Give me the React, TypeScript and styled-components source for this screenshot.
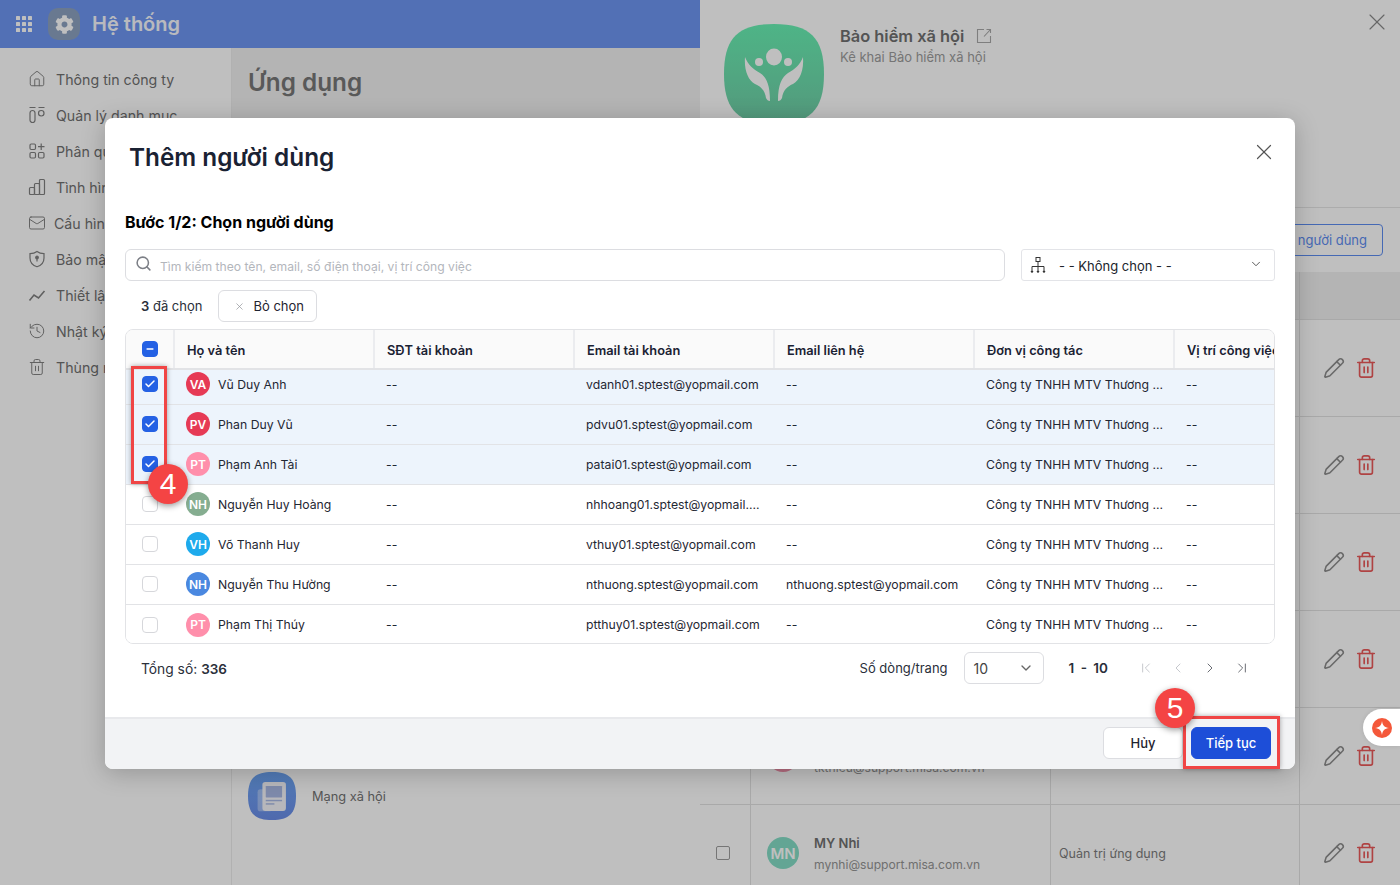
import React from "react";
import styled, { createGlobalStyle } from "styled-components";
import { FaCog } from "react-icons/fa";
import {
  Home,
  Mail,
  History,
  Trash2,
  Pencil,
  Search,
  X,
  ChevronDown,
  ChevronFirst,
  ChevronLast,
  ChevronLeft,
  ChevronRight,
  Check,
  Minus,
} from "lucide-react";

const GlobalStyle = createGlobalStyle`
  html, body {
    margin: 0;
    padding: 0;
    background: #fff;
    font-family: Inter, "Noto Sans", "Liberation Sans", sans-serif;
  }
  * { box-sizing: border-box; }
`;

const Screen = styled.div`
  position: relative;
  width: 1400px;
  height: 885px;
  display: flex;
  overflow: hidden;
`;

const Backdrop = styled.div`
  position: absolute;
  inset: 0;
  background: rgba(0, 0, 0, 0.25);
`;

/* ---------- left app ---------- */
const AppPane = styled.div`
  width: 700px;
  display: flex;
  flex-direction: column;
  background: #fff;
`;

const TopBar = styled.header`
  height: 48px;
  flex: none;
  background: #6e96f2;
  display: flex;
  align-items: center;
  padding-left: 16px;
  color: #fff;
`;

const GearTile = styled.div`
  width: 32px;
  height: 32px;
  margin-left: 16px;
  border-radius: 10px;
  background: #8da2c0;
  display: flex;
  align-items: center;
  justify-content: center;
`;

const AppName = styled.span`
  margin-left: 12px;
  font-size: 20px;
  font-weight: 600;
  color: #fff;
  opacity: 0.95;
`;

const AppBody = styled.div`
  flex: 1;
  display: flex;
  min-height: 0;
`;

const Sidebar = styled.nav`
  width: 232px;
  padding-top: 13.4px;
  border-right: 1px solid #ececec;
  display: flex;
  flex-direction: column;
`;

const NavItem = styled.div<{ $tight?: boolean }>`
  height: 36px;
  padding-left: 28px;
  display: flex;
  align-items: center;
  gap: ${(p) => (p.$tight ? "8px" : "10px")};
  font-size: 14.2px;
  color: #707070;
  svg { flex: none; color: #808080; }
`;

const Main = styled.main`
  flex: 1;
  display: flex;
  flex-direction: column;
`;

const PageHead = styled.div`
  height: 70px;
  padding-left: 16px;
  background: #f1f1f1;
  display: flex;
  align-items: center;
  font-size: 24.3px;
  font-weight: 600;
  color: #777;
  padding-bottom: 3px;
`;

const AppRow = styled.div`
  margin-top: 654px;
  padding-left: 16px;
  display: flex;
  align-items: center;
  gap: 16px;
  font-size: 12.8px;
  color: #727272;
`;

/* ---------- right drawer ---------- */
const Drawer = styled.aside`
  width: 700px;
  display: flex;
  flex-direction: column;
  background: #fff;
`;

const DrawerHead = styled.div`
  position: relative;
  height: 208px;
  flex: none;
  padding: 24px 0 0 24px;
  display: flex;
  gap: 16px;
  border-bottom: 1px solid #e6e6e6;
`;

const DrawerTitle = styled.div`
  padding-top: 2px;
  font-size: 16.4px;
  font-weight: 600;
  color: #707070;
  display: flex;
  align-items: center;
  gap: 12px;
  height: 22px;
  svg { color: #a8a8a8; }
`;

const DrawerSub = styled.div`
  margin-top: 3px;
  font-size: 13px;
  color: #9c9c9c;
`;

const DrawerClose = styled.div`
  position: absolute;
  top: 8px;
  right: 9px;
  color: #8a8a8a;
  display: flex;
`;

const DrawerTools = styled.div`
  height: 64px;
  flex: none;
  padding: 16px 17px 0 0;
  display: flex;
  justify-content: flex-end;
`;

const OutlineButton = styled.div`
  height: 32px;
  padding: 0 15px;
  border: 1px solid #5d8cf0;
  border-radius: 4px;
  display: flex;
  align-items: center;
  font-size: 13px;
  color: #5d8cf0;
`;

const MemberHead = styled.div`
  height: 48px;
  flex: none;
  background: #f1f1f1;
  border-bottom: 1px solid #e2e2e2;
  display: grid;
  grid-template-columns: 51px 300px 249px 1fr;
`;

const MemberRow = styled.div`
  height: 97px;
  flex: none;
  border-bottom: 1px solid #e2e2e2;
  display: grid;
  grid-template-columns: 51px 300px 249px 1fr;
`;

const MemberCell = styled.div`
  border-right: 1px solid #e2e2e2;
  display: flex;
  align-items: center;
  font-size: 12.5px;
  color: #7c7c7c;
  padding-left: 8px;
  &:last-child { border-right: 0; }
`;

const MemberCheckCell = styled(MemberCell)`
  padding-left: 16px;
`;

const MemberBox = styled.span`
  width: 14px;
  height: 14px;
  border: 1px solid #9c9c9c;
  border-radius: 2px;
`;

const NameCell = styled(MemberCell)`
  padding-left: 16px;
  gap: 15px;
`;

const MemberAvatar = styled.span<{ $bg: string }>`
  width: 32px;
  height: 32px;
  border-radius: 50%;
  background: ${(p) => p.$bg};
  color: #fff;
  font-size: 15px;
  font-weight: 600;
  display: flex;
  align-items: center;
  justify-content: center;
  opacity: 0.95;
`;

const MemberName = styled.div`
  font-size: 13px;
  font-weight: 600;
  color: #707070;
`;

const MemberMail = styled.div`
  margin-top: 6px;
  font-size: 12.1px;
  color: #949494;
`;

const ActionCell = styled(MemberCell)`
  padding-left: 23px;
  gap: 10px;
`;

const AiBubble = styled.div`
  position: absolute;
  top: 709px;
  right: 0;
  width: 37px;
  height: 37px;
  border-radius: 19px 0 0 19px;
  background: #fff;
  display: flex;
  align-items: center;
  padding-left: 9px;
  box-shadow: 0 0 4px rgba(0, 0, 0, 0.1);
`;

/* ---------- modal ---------- */
const Modal = styled.section`
  position: absolute;
  left: 105px;
  top: 118px;
  width: 1190px;
  height: 651px;
  border-radius: 8px;
  background: #fff;
  overflow: hidden;
  display: flex;
  flex-direction: column;
  box-shadow: 0 4px 24px rgba(0, 0, 0, 0.22);
`;

const ModalHead = styled.div`
  height: 92px;
  flex: none;
  padding: 24px 18px 0 24px;
  display: flex;
  justify-content: space-between;
  align-items: flex-start;
`;

const ModalTitle = styled.h2`
  margin: 0;
  font-size: 24.3px;
  line-height: 30px;
  font-weight: 600;
  color: #1a2233;
`;

const ModalClose = styled.div`
  margin-top: -3px;
  display: flex;
  color: #555;
`;

const ModalBody = styled.div`
  flex: 1;
  padding: 0 20px;
  display: flex;
  flex-direction: column;
`;

const StepTitle = styled.div`
  font-size: 16px;
  line-height: 24px;
  font-weight: 700;
  color: #000;
`;

const FilterRow = styled.div`
  margin-top: 15px;
  display: flex;
  gap: 16px;
`;

const SearchBox = styled.div`
  width: 880px;
  height: 32px;
  padding-left: 9px;
  border: 1px solid #dcdde1;
  border-radius: 6px;
  display: flex;
  align-items: center;
  gap: 8px;
  font-size: 12.15px;
  color: #b3b6bc;
  svg { color: #7c7f86; margin-top: -3px; }
  span { padding-top: 3px; }
`;

const OrgSelect = styled.div`
  width: 254px;
  height: 32px;
  padding: 0 11px 0 7px;
  border: 1px solid #e3e4e8;
  border-radius: 3px;
  display: flex;
  align-items: center;
  gap: 12px;
  font-size: 13px;
  color: #20242c;
  span { flex: 1; padding-top: 1px; }
`;

const SelectChevron = styled(ChevronDown)`
  margin-top: -3px;
  color: #444;
`;

const SelectedRow = styled.div`
  margin-top: 9px;
  padding-left: 16px;
  display: flex;
  align-items: center;
  gap: 16px;
  font-size: 13px;
  color: #2a2f3a;
  b { font-weight: 600; }
`;

const ClearButton = styled.div`
  height: 32px;
  width: 99px;
  padding-left: 15px;
  border: 1px solid #dcdde1;
  border-radius: 6px;
  display: flex;
  align-items: center;
  gap: 8px;
  color: #1f2430;
  svg { color: #8f9197; }
`;

const TableFrame = styled.div`
  margin-top: 7px;
  height: 315px;
  border: 1px solid #e2e3e6;
  border-radius: 8px;
  overflow: hidden;
`;

const Row = styled.div<{ $selected?: boolean; $clipped?: boolean }>`
  height: ${(p) => (p.$clipped ? "35px" : "40px")};
  width: 1200px;
  display: grid;
  grid-template-columns: 49px 200px 200px 200px 200px 200px 1fr;
  background: ${(p) => (p.$selected ? "#edf4fc" : "#fff")};
  border-bottom: 1px solid #e2e3e6;
  padding-bottom: ${(p) => (p.$clipped ? "6px" : "1px")};
  &:last-child { border-bottom: 0; }
`;

const HeadRow = styled(Row)`
  height: 40px;
  padding: 0;
  background: #fafafa;
  border-bottom: 2px solid #e2e3e6;
`;

const HeadCell = styled.div`
  padding: 3px 0 0 12px;
  display: flex;
  align-items: center;
  font-size: 12.8px;
  font-weight: 600;
  color: #1a2233;
  white-space: nowrap;
  border-right: 2px solid #ebecef;
  &:last-child { border-right: 0; }
`;

const HeadCheckCell = styled(HeadCell)`
  padding: 0 0 0 16px;
`;

const Cell = styled.div`
  padding: 0 12px 0 11px;
  display: flex;
  align-items: center;
  gap: 8px;
  font-size: 12.25px;
  color: #1f2733;
  white-space: nowrap;
  min-width: 0;
`;

const CheckCell = styled.div`
  display: flex;
  align-items: center;
  justify-content: center;
  padding-right: 1px;
`;

const CheckBox = styled.span<{ $on?: boolean }>`
  width: 16px;
  height: 16px;
  border-radius: 4px;
  display: flex;
  align-items: center;
  justify-content: center;
  background: ${(p) => (p.$on ? "#2461e4" : "#fff")};
  border: 1px solid ${(p) => (p.$on ? "#2461e4" : "#d6d7db")};
  color: #fff;
`;

const Avatar = styled.span<{ $bg: string }>`
  width: 24px;
  height: 24px;
  flex: none;
  border-radius: 50%;
  background: ${(p) => p.$bg};
  color: #fff;
  font-size: 12px;
  font-weight: 600;
  display: flex;
  align-items: center;
  justify-content: center;
`;

const Pager = styled.div`
  flex: 1;
  padding: 8px 25px 0 16px;
  display: flex;
  align-items: flex-start;
  font-size: 13.5px;
  color: #2a2f3a;
`;

const Total = styled.div`
  flex: 1;
  height: 32px;
  padding-top: 2px;
  display: flex;
  align-items: center;
  gap: 4px;
  font-size: 13.8px;
  b { font-weight: 600; font-size: 13.5px; }
`;

const PerPage = styled.div`
  height: 32px;
  display: flex;
  align-items: center;
  font-size: 13px;
`;

const PageSize = styled.div`
  width: 80px;
  height: 32px;
  margin-left: 16px;
  padding: 0 9px;
  border: 1px solid #dcdde1;
  border-radius: 6px;
  display: flex;
  align-items: center;
  justify-content: space-between;
  font-size: 14px;
  color: #444;
`;

const PageRange = styled.b`
  height: 32px;
  margin-left: 25px;
  display: flex;
  align-items: center;
  font-size: 13.5px;
  font-weight: 600;
  word-spacing: 3px;
`;

const PageButtons = styled.div`
  height: 32px;
  margin-left: 30px;
  display: flex;
  align-items: center;
  gap: 16px;
`;

const PageButton = styled.span<{ $off?: boolean }>`
  display: flex;
  color: ${(p) => (p.$off ? "#c6c8cd" : "#6a6d74")};
`;

const ModalFoot = styled.div`
  height: 52px;
  flex: none;
  padding: 8px 24px 0 0;
  border-top: 2px solid #e8e9ec;
  background: #f2f3f5;
  display: flex;
  justify-content: flex-end;
  gap: 8px;
`;

const CancelButton = styled.div`
  width: 80px;
  height: 32px;
  border: 1px solid #dcdde1;
  border-radius: 6px;
  background: #fff;
  display: flex;
  align-items: center;
  justify-content: center;
  font-size: 13px;
  font-weight: 500;
  color: #1f2430;
`;

const NextButton = styled(CancelButton)`
  border-color: #1d4ed8;
  background: #1d4ed8;
  color: #fff;
`;

/* ---------- tutorial marks ---------- */
const CheckMarkFrame = styled.div`
  position: absolute;
  left: 131px;
  top: 366px;
  width: 36px;
  height: 118px;
  border: 3px solid #f04545;
  box-shadow: 0 0 5px rgba(0, 0, 0, 0.35);
`;

const NextMarkFrame = styled.div`
  position: absolute;
  left: 1183px;
  top: 716px;
  width: 97px;
  height: 53px;
  border: 3px solid #f04545;
  box-shadow: 0 0 5px rgba(0, 0, 0, 0.35);
`;

const Bubble = styled.div`
  position: absolute;
  width: 40px;
  height: 40px;
  border-radius: 50%;
  background: #f44444;
  color: #fff;
  font-family: "Liberation Sans", Arial, sans-serif;
  font-size: 30px;
  display: flex;
  align-items: center;
  justify-content: center;
  box-shadow: 0 2px 6px rgba(0, 0, 0, 0.4);
`;

const BubbleFour = styled(Bubble)`
  left: 148px;
  top: 464px;
`;

const BubbleFive = styled(Bubble)`
  left: 1155px;
  top: 688px;
`;

/* ---------- drawings ---------- */
const SQUIRCLE = "M50 0C86 0 100 14 100 50S86 100 50 100 0 86 0 50 14 0 50 0Z";

const InsuranceLogo = () => (
  <svg width="100" height="100" viewBox="0 0 100 100">
    <defs>
      <linearGradient id="ins" x1="0" y1="0" x2="0" y2="1">
        <stop offset="0" stopColor="#69f1b4" />
        <stop offset="1" stopColor="#70cca6" />
      </linearGradient>
    </defs>
    <path d={SQUIRCLE} fill="url(#ins)" />
    <g fill="#fff">
      <ellipse cx="50" cy="33" rx="8" ry="8.5" />
      <circle cx="35" cy="38" r="4" />
      <circle cx="64" cy="38" r="4" />
      <path d="M21 33C24 41 29 45 36 49C42 53 46 60 46 77C44 77 43 76 42 74C41 66 36 62 31 60C24 56 20 46 21 33Z" />
      <path d="M79 33C76 41 71 45 64 49C58 53 54 60 54 77C56 77 57 76 58 74C59 66 64 62 69 60C76 56 80 46 79 33Z" />
      <path d="M36 53C42 55 44 59 44 66C40 64 36 60 36 53Z" opacity="0.8" />
      <path d="M64 53C58 55 56 59 56 66C60 64 64 60 64 53Z" opacity="0.8" />
    </g>
  </svg>
);

const SocialLogo = () => (
  <svg width="48" height="48" viewBox="0 0 100 100">
    <defs>
      <linearGradient id="soc" x1="0" y1="0" x2="0" y2="1">
        <stop offset="0" stopColor="#6ea7f5" />
        <stop offset="1" stopColor="#6a8de8" />
      </linearGradient>
    </defs>
    <path d={SQUIRCLE} fill="url(#soc)" />
    <rect x="20" y="36" width="30" height="46" rx="6" fill="#fff" opacity="0.35" />
    <rect x="30" y="21" width="49" height="60" rx="6" fill="#f4f5fa" />
    <rect x="37" y="29" width="34" height="24" rx="1" fill="#a9b8e4" />
    <rect x="37" y="58" width="34" height="3" fill="#a9b8e4" />
    <rect x="37" y="65" width="18" height="3" fill="#a9b8e4" />
  </svg>
);

const LauncherIcon = () => (
  <svg width="16" height="16" viewBox="0 0 16 16" fill="#fff">
    {[0, 6, 12].map((y) =>
      [0, 6, 12].map((x) => <rect key={`${x}-${y}`} x={x} y={y} width="4" height="4" rx="0.6" />)
    )}
  </svg>
);

const OrgIcon = () => (
  <svg width="18" height="18" viewBox="0 0 18 18" fill="none" stroke="#333" strokeWidth="1">
    <rect x="7" y="1.5" width="4" height="4" />
    <path d="M9 5.5V14M3 14V10.5H15V14" />
    <circle cx="3" cy="15.5" r="1.2" fill="#333" stroke="none" />
    <circle cx="9" cy="15.5" r="1.2" fill="#333" stroke="none" />
    <circle cx="15" cy="15.5" r="1.2" fill="#333" stroke="none" />
  </svg>
);

const CatalogIcon = () => (
  <svg width="18" height="18" viewBox="0 0 18 18" fill="none" stroke="currentColor" strokeWidth="1.2">
    <path d="M1.5 1.5H7.5M10.5 1.5H16.5" />
    <rect x="2" y="4.5" width="5" height="12" rx="2.5" />
    <rect x="10.5" y="4.5" width="5.5" height="5.5" rx="2.7" />
  </svg>
);

const RolesIcon = () => (
  <svg width="18" height="18" viewBox="0 0 18 18" fill="none" stroke="currentColor" strokeWidth="1.2">
    <rect x="2" y="2" width="5.5" height="5.5" rx="1.2" />
    <rect x="2" y="10.5" width="5.5" height="5.5" rx="1.2" />
    <rect x="10.5" y="10.5" width="5.5" height="5.5" rx="1.2" />
    <path d="M13.2 1.5V8M10 4.7H16.5" />
  </svg>
);

const UsageIcon = () => (
  <svg width="18" height="18" viewBox="0 0 18 18" fill="none" stroke="currentColor" strokeWidth="1.2">
    <rect x="1.5" y="9.5" width="5" height="7" rx="1" />
    <rect x="6.5" y="5.5" width="5" height="11" rx="1" />
    <rect x="11.5" y="1.5" width="5" height="15" rx="1" />
  </svg>
);

const ShieldIcon = () => (
  <svg width="18" height="18" viewBox="0 0 18 18" fill="none" stroke="currentColor" strokeWidth="1.2">
    <path d="M9 1.5C11 3 13.5 3.6 16 3.6V8C16 12.5 13 15.5 9 16.8C5 15.5 2 12.5 2 8V3.6C4.5 3.6 7 3 9 1.5Z" />
    <circle cx="9" cy="7.5" r="1.3" fill="currentColor" />
    <path d="M9 8.5V11.5" />
  </svg>
);

const SetupIcon = () => (
  <svg width="18" height="18" viewBox="0 0 18 18" fill="none" stroke="currentColor" strokeWidth="1.6">
    <path d="M1.5 14.5L6 9L10.5 12L16.5 5" />
  </svg>
);

const ExternalIcon = () => (
  <svg width="16" height="16" viewBox="0 0 16 16" fill="none" stroke="currentColor" strokeWidth="1.1">
    <path d="M8 1.5H1.5V14.5H14.5V8" />
    <path d="M8 8.5L14.5 1.5M10.5 1.5H14.5V5" />
  </svg>
);

const people = [
  { initials: "VA", color: "#e63a55", name: "Vũ Duy Anh", mail: "vdanh01.sptest@yopmail.com", contact: "--", selected: true },
  { initials: "PV", color: "#e63a55", name: "Phan Duy Vũ", mail: "pdvu01.sptest@yopmail.com", contact: "--", selected: true },
  { initials: "PT", color: "#ff8fab", name: "Phạm Anh Tài", mail: "patai01.sptest@yopmail.com", contact: "--", selected: true },
  { initials: "NH", color: "#85ad90", name: "Nguyễn Huy Hoàng", mail: "nhhoang01.sptest@yopmail....", contact: "--", selected: false },
  { initials: "VH", color: "#1eaaec", name: "Võ Thanh Huy", mail: "vthuy01.sptest@yopmail.com", contact: "--", selected: false },
  { initials: "NH", color: "#4a88e0", name: "Nguyễn Thu Hường", mail: "nthuong.sptest@yopmail.com", contact: "nthuong.sptest@yopmail.com", selected: false },
  { initials: "PT", color: "#ff8fab", name: "Phạm Thị Thúy", mail: "ptthuy01.sptest@yopmail.com", contact: "--", selected: false },
];

const nav = [
  { label: "Thông tin công ty", icon: <Home size={18} strokeWidth={1.3} /> },
  { label: "Quản lý danh mục", icon: <CatalogIcon /> },
  { label: "Phân quyền", icon: <RolesIcon /> },
  { label: "Tình hình sử dụng", icon: <UsageIcon /> },
  { label: "Cấu hình", icon: <Mail size={18} strokeWidth={1.3} />, tight: true },
  { label: "Bảo mật", icon: <ShieldIcon /> },
  { label: "Thiết lập", icon: <SetupIcon /> },
  { label: "Nhật ký", icon: <History size={18} strokeWidth={1.3} /> },
  { label: "Thùng rác", icon: <Trash2 size={18} strokeWidth={1.3} /> },
];

const Actions = () => (
  <ActionCell>
    <Pencil size={22} strokeWidth={1.7} color="#8c8c8c" />
    <Trash2 size={22} strokeWidth={1.8} color="#ea5a5a" />
  </ActionCell>
);

const App: React.FC = () => {
  return (
    <Screen>
      <GlobalStyle />
      <AppPane>
        <TopBar>
          <LauncherIcon />
          <GearTile>
            <FaCog size={19} color="#fff" />
          </GearTile>
          <AppName>Hệ thống</AppName>
        </TopBar>
        <AppBody>
          <Sidebar>
            {nav.map((item) => (
              <NavItem key={item.label} $tight={item.tight}>
                {item.icon}
                {item.label}
              </NavItem>
            ))}
          </Sidebar>
          <Main>
            <PageHead>Ứng dụng</PageHead>
            <AppRow>
              <SocialLogo />
              Mạng xã hội
            </AppRow>
          </Main>
        </AppBody>
      </AppPane>

      <Drawer>
        <DrawerHead>
          <InsuranceLogo />
          <div>
            <DrawerTitle>
              Bảo hiểm xã hội
              <ExternalIcon />
            </DrawerTitle>
            <DrawerSub>Kê khai Bảo hiểm xã hội</DrawerSub>
          </div>
          <DrawerClose>
            <X size={28} strokeWidth={1} />
          </DrawerClose>
        </DrawerHead>
        <DrawerTools>
          <OutlineButton>Thêm người dùng</OutlineButton>
        </DrawerTools>
        <MemberHead>
          <MemberCell />
          <MemberCell />
          <MemberCell />
          <MemberCell />
        </MemberHead>
        {[0, 1, 2, 3].map((n) => (
          <MemberRow key={n}>
            <MemberCell />
            <MemberCell />
            <MemberCell />
            <Actions />
          </MemberRow>
        ))}
        <MemberRow>
          <MemberCheckCell>
            <MemberBox />
          </MemberCheckCell>
          <NameCell>
            <MemberAvatar $bg="#f08aa5" />
            <div>
              <MemberName>&nbsp;</MemberName>
              <MemberMail>tkthieu@support.misa.com.vn</MemberMail>
            </div>
          </NameCell>
          <MemberCell />
          <Actions />
        </MemberRow>
        <MemberRow>
          <MemberCheckCell>
            <MemberBox />
          </MemberCheckCell>
          <NameCell>
            <MemberAvatar $bg="#7fdcc4">MN</MemberAvatar>
            <div>
              <MemberName>MY Nhi</MemberName>
              <MemberMail>mynhi@support.misa.com.vn</MemberMail>
            </div>
          </NameCell>
          <MemberCell>Quản trị ứng dụng</MemberCell>
          <Actions />
        </MemberRow>
      </Drawer>

      <Backdrop />

      <AiBubble>
        <svg width="20" height="20" viewBox="0 0 20 20">
          <circle cx="10" cy="10" r="10" fill="#f4583a" />
          <path d="M10 3C10.6 7.5 12.5 9.4 17 10C12.5 10.6 10.6 12.5 10 17C9.4 12.5 7.5 10.6 3 10C7.5 9.4 9.4 7.5 10 3Z" fill="#fff" />
        </svg>
      </AiBubble>

      <Modal>
        <ModalHead>
          <ModalTitle>Thêm người dùng</ModalTitle>
          <ModalClose>
            <X size={26} strokeWidth={1.1} />
          </ModalClose>
        </ModalHead>
        <ModalBody>
          <StepTitle>Bước 1/2: Chọn người dùng</StepTitle>
          <FilterRow>
            <SearchBox>
              <Search size={17} strokeWidth={2.2} />
              <span>Tìm kiếm theo tên, email, số điện thoại, vị trí công việc</span>
            </SearchBox>
            <OrgSelect>
              <OrgIcon />
              <span>- - Không chọn - -</span>
              <SelectChevron size={14} strokeWidth={1.5} />
            </OrgSelect>
          </FilterRow>
          <SelectedRow>
            <div>
              <b>3</b> đã chọn
            </div>
            <ClearButton>
              <X size={11} strokeWidth={1.5} />
              Bỏ chọn
            </ClearButton>
          </SelectedRow>
          <TableFrame>
            <HeadRow>
              <HeadCheckCell>
                <CheckBox $on>
                  <Minus size={10} strokeWidth={3.5} />
                </CheckBox>
              </HeadCheckCell>
              <HeadCell>Họ và tên</HeadCell>
              <HeadCell>SĐT tài khoản</HeadCell>
              <HeadCell>Email tài khoản</HeadCell>
              <HeadCell>Email liên hệ</HeadCell>
              <HeadCell>Đơn vị công tác</HeadCell>
              <HeadCell>Vị trí công việc</HeadCell>
            </HeadRow>
            {people.map((person, i) => (
              <Row key={person.mail} $selected={person.selected} $clipped={i === 0}>
                <CheckCell>
                  <CheckBox $on={person.selected}>
                    {person.selected && <Check size={12} strokeWidth={3} />}
                  </CheckBox>
                </CheckCell>
                <Cell>
                  <Avatar $bg={person.color}>{person.initials}</Avatar>
                  {person.name}
                </Cell>
                <Cell>--</Cell>
                <Cell>{person.mail}</Cell>
                <Cell>{person.contact}</Cell>
                <Cell>Công ty TNHH MTV Thương ...</Cell>
                <Cell>--</Cell>
              </Row>
            ))}
          </TableFrame>
          <Pager>
            <Total>
              Tổng số: <b>336</b>
            </Total>
            <PerPage>Số dòng/trang</PerPage>
            <PageSize>
              10
              <ChevronDown size={16} strokeWidth={2} color="#666" />
            </PageSize>
            <PageRange>1 - 10</PageRange>
            <PageButtons>
              <PageButton $off>
                <ChevronFirst size={16} strokeWidth={1.5} />
              </PageButton>
              <PageButton $off>
                <ChevronLeft size={16} strokeWidth={1.5} />
              </PageButton>
              <PageButton>
                <ChevronRight size={16} strokeWidth={1.5} />
              </PageButton>
              <PageButton>
                <ChevronLast size={16} strokeWidth={1.5} />
              </PageButton>
            </PageButtons>
          </Pager>
        </ModalBody>
        <ModalFoot>
          <CancelButton>Hủy</CancelButton>
          <NextButton>Tiếp tục</NextButton>
        </ModalFoot>
      </Modal>

      <CheckMarkFrame />
      <BubbleFour>4</BubbleFour>
      <NextMarkFrame />
      <BubbleFive>5</BubbleFive>
    </Screen>
  );
};

export default App;
